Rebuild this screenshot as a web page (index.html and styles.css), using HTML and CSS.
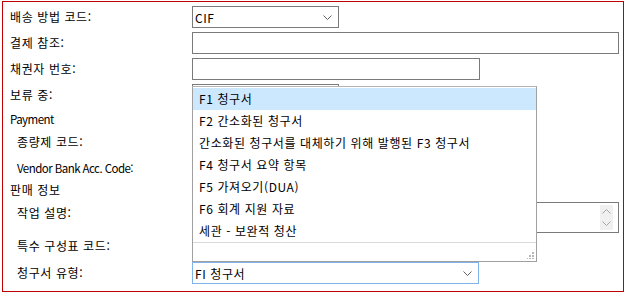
FILE: index.html
```html
<!DOCTYPE html>
<html lang="ko">
<head>
  <meta charset="UTF-8">
  <title>청구서 설정</title>
  <link rel="stylesheet" href="styles.css">
</head>
<body>
  <div class="frame">
    <div class="row">
      <div class="label">배송 방법 코드:</div>
      <div class="combo w-short"><span>CIF</span><svg class="chev" width="9" height="5" viewBox="0 0 9 5"><polyline points="0.5,0.5 4.5,4.5 8.5,0.5" /></svg></div>
    </div>
    <div class="row">
      <div class="label">결제 참조:</div>
      <div class="field w-full"></div>
    </div>
    <div class="row">
      <div class="label">채권자 번호:</div>
      <div class="field w-mid"></div>
    </div>
    <div class="row">
      <div class="label">보류 중:</div>
      <div class="field w-short"></div>
    </div>

    <div class="row heading">
      <div class="label en">Payment</div>
    </div>
    <div class="row sub-a">
      <div class="label sub">종량제 코드:</div>
    </div>
    <div class="row sub-b">
      <div class="label sub en">Vendor Bank Acc. Code:</div>
    </div>

    <div class="row heading-b">
      <div class="label">판매 정보</div>
    </div>
    <div class="row memo">
      <div class="label sub">작업 설명:</div>
      <div class="memo-box w-full">
        <div class="spin">
          <svg width="9" height="5" viewBox="0 0 9 5"><polyline points="0.5,4.5 4.5,0.5 8.5,4.5" /></svg>
          <svg width="9" height="5" viewBox="0 0 9 5"><polyline points="0.5,0.5 4.5,4.5 8.5,0.5" /></svg>
        </div>
      </div>
    </div>
    <div class="row special">
      <div class="label sub">특수 구성표 코드:</div>
    </div>
    <div class="row last">
      <div class="label sub">청구서 유형:</div>
      <div class="combo focused w-mid2"><span>FI 청구서</span><svg class="chev" width="9" height="5" viewBox="0 0 9 5"><polyline points="0.5,0.5 4.5,4.5 8.5,0.5" /></svg></div>
    </div>

    <!-- open dropdown of 청구서 유형 -->
    <div class="dropdown">
      <ul class="options">
        <li class="selected">F1 청구서</li>
        <li>F2 간소화된 청구서</li>
        <li>간소화된 청구서를 대체하기 위해 발행된 F3 청구서</li>
        <li>F4 청구서 요약 항목</li>
        <li>F5 가져오기(DUA)</li>
        <li>F6 회계 지원 자료</li>
        <li>세관 - 보완적 청산</li>
      </ul>
      <div class="dropdown-foot">
        <svg class="grip" width="7" height="7" viewBox="0 0 7 7">
          <rect x="5" y="0" width="2" height="2" />
          <rect x="2" y="3" width="2" height="2" />
          <rect x="5" y="3" width="2" height="2" />
          <rect x="-1" y="6" width="2" height="2" />
          <rect x="2" y="6" width="2" height="2" />
          <rect x="5" y="6" width="2" height="2" />
        </svg>
      </div>
    </div>
  </div>
</body>
</html>
```

FILE: styles.css
```css
* {
  box-sizing: border-box;
}

body {
  margin: 0;
  background: #fff;
  font-family: "Noto Sans CJK KR", "Noto Sans", sans-serif;
  font-size: 12px;
  letter-spacing: 0.6px;
  color: #000;
}

.frame {
  position: relative;
  width: 622px;
  height: 291px;
  margin: 1px 0 0 2px;
  padding-top: 2px;
  border: 1px solid #c00000;
}

.row {
  display: grid;
  grid-template-columns: 189px 1fr;
  align-items: center;
  height: 26px;
}

.label {
  padding-left: 7px;
  line-height: 16px;
  white-space: nowrap;
}

.label.sub {
  padding-left: 14px;
}

.label.en {
  font-size: 11.5px;
  letter-spacing: -0.55px;
}

.heading {
  height: 22px;
}

.sub-a {
  height: 24px;
}

.sub-b {
  height: 28px;
}

.heading-b {
  height: 16px;
}

.memo {
  height: 36px;
  align-items: start;
}

.memo .label {
  padding-top: 7px;
}

.special {
  height: 24px;
}

.last {
  height: 30px;
}

.field,
.combo,
.memo-box {
  height: 22px;
  border: 1px solid #7a7a7a;
  background: #fff;
}

.combo {
  display: flex;
  align-items: center;
  justify-content: space-between;
  padding: 0 6px 0 2px;
}

.combo.focused {
  border-color: #7eb4ea;
}

.chev polyline,
.spin polyline {
  fill: none;
  stroke: #606060;
  stroke-width: 1;
}

.w-short {
  width: 147px;
}

.w-mid {
  width: 288px;
}

.w-mid2 {
  width: 287px;
}

.w-full {
  width: 427px;
}

.memo-box {
  height: 31px;
  margin-top: 4px;
  display: flex;
  justify-content: flex-end;
  padding: 2px 5px 2px 0;
}

.spin {
  width: 13px;
  background: #f0f0f0;
  display: flex;
  flex-direction: column;
  justify-content: space-around;
  align-items: center;
}

.spin polyline {
  stroke: #a6a6a6;
}

.dropdown {
  position: absolute;
  left: 189px;
  top: 84px;
  width: 345px;
  height: 176px;
  border: 1px solid #a0a0a0;
  border-top-color: #b4b4b4;
  background: #fff;
  padding-top: 1px;
  display: flex;
  flex-direction: column;
}

.options {
  list-style: none;
  margin: 0;
  padding: 0;
}

.options li {
  height: 22px;
  line-height: 22px;
  padding-left: 6px;
  white-space: nowrap;
}

.options li.selected {
  background: #cce8ff;
}

.dropdown-foot {
  flex: 1;
  border-top: 1px solid #d9d9d9;
  display: flex;
  justify-content: flex-end;
  align-items: flex-end;
  padding: 0 2px 2px 0;
}

.grip rect {
  fill: #b8b8b8;
}
```
